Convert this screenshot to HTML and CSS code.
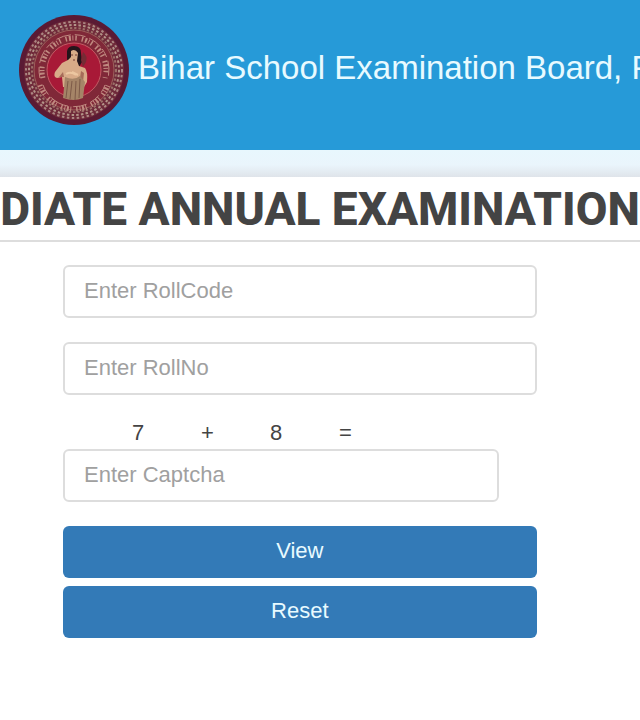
FILE: index.html
```html
<!DOCTYPE html>
<html lang="en">
<head>
    <meta charset="UTF-8">
    <meta name="viewport" content="width=device-width, initial-scale=1.0">
    <title>Bihar School Examination Board</title>
    <link rel="stylesheet" href="styles.css">
</head>
<body>
    <header class="header">
        <svg class="logo" viewBox="0 0 112 112" role="img" aria-label="Board emblem">
            <!-- rings -->
            <circle cx="56" cy="56" r="55" fill="#5a1a34"/>
            <circle cx="56" cy="56" r="50" fill="#6f2a3a"/>
            <circle cx="56" cy="56" r="48" fill="none" stroke="#ab8682" stroke-width="2" stroke-dasharray="2.5 2.5"/>
            <circle cx="56" cy="56" r="45" fill="none" stroke="#b39488" stroke-width="2" stroke-dasharray="2.5 2.2"/>
            <circle cx="56" cy="56" r="42" fill="none" stroke="#9c7068" stroke-width="2" stroke-dasharray="2.3 2"/>
            <circle cx="56" cy="56" r="40" fill="#802838" stroke="#9c5f5a" stroke-width="1"/>
            <!-- lettering band -->
            <g fill="none" stroke="#c08a80">
                <path d="M22 64A35 35 0 1 1 90 64" stroke-width="1" stroke-dasharray="11 4 14 3 9 4 15 4"/>
                <path d="M25 64A32 32 0 1 1 87 64" stroke-width="5" stroke-dasharray="1.5 2 2 1.5 1 2 1.5 5"/>
                <path d="M22 71A36 36 0 0 0 90 71" stroke-width="5" stroke-dasharray="1.5 2 1 1.5 2 1.5 1 5"/>
                <path d="M25 71A33 33 0 0 0 87 71" stroke-width="1" stroke-dasharray="11 4 19 5 14 4"/>
            </g>
            <circle cx="56" cy="56" r="27" fill="#a81937" stroke="#c45a64" stroke-width="1"/>
            <!-- figure -->
            <path d="M49 37q1-5 7-5q7 0 7 7l1 9-3 5-10-2-2-6z" fill="#24151b"/>
            <path d="M65 38q5 4 3 10l-3 5-2-7z" fill="#762b35"/>
            <path d="M53 37q4-3 7 2l-1 8 2 5 6 2q3 4 2 14l-3 5-9 1-12-1-1-10-5 1q-4-1-2-6l7-9 6-3 3-3z" fill="#d8ab88"/>
            <path d="M45 58l-4 5 5 0zM63 57l3 2-1 9-3-4z" fill="#a66c59"/>
            <path d="M47 63q9 4 15-1l5 6-2 16q-9 4-20 0z" fill="#a58467"/>
            <path d="M50 67l-2 17M54 67l-2 18M58 67l-1 19M62 65l-1 19" fill="none" stroke="#7d5a48" stroke-width="1"/>
            <path d="M48 60q5-3 10 1M54 58l6 3" fill="none" stroke="#ecc6a0" stroke-width="2"/>
            <path d="M53 41h2M57 41h2M55 46h2" stroke="#703c35" stroke-width="1"/>
        </svg>
        <span class="board-name">Bihar School Examination Board, P</span>
    </header>
    <div class="strip"></div>
    <h1 class="exam-title">DIATE ANNUAL EXAMINATION</h1>

    <form class="result-form">
        <input class="field" type="text" placeholder="Enter RollCode" aria-label="Enter RollCode">
        <input class="field" type="text" placeholder="Enter RollNo" aria-label="Enter RollNo">
        <div class="captcha">
            <label class="captcha-sum" for="captcha">
                <span>7</span>
                <span>+</span>
                <span>8</span>
                <span>=</span>
            </label>
            <input class="field captcha-field" type="text" id="captcha" placeholder="Enter Captcha">
        </div>
        <div class="buttons">
            <button class="btn" type="submit">View</button>
            <button class="btn" type="reset">Reset</button>
        </div>
    </form>
</body>
</html>
```
FILE: styles.css
```css
* {
    box-sizing: border-box;
}

body {
    margin: 0;
    background-color: #fff;
    font-family: "Liberation Sans", Arial, sans-serif;
    font-size: 22px;
    color: #444;
    overflow-x: hidden;
}

.header {
    display: flex;
    align-items: flex-start;
    gap: 8px;
    height: 150px;
    padding: 14px 0 0 18px;
    background-color: #269ad8;
    overflow: hidden;
}

.logo {
    width: 112px;
    height: 112px;
    flex-shrink: 0;
}

.board-name {
    color: #e8faff;
    font-size: 33px;
    line-height: 108px;
    white-space: nowrap;
}

.strip {
    height: 27px;
    background: linear-gradient(#e8f7fd, #eaf5fc 55%, #dfe4ea);
}

.exam-title {
    display: flex;
    justify-content: center;
    margin: 0;
    padding-top: 1px;
    border-bottom: 2px solid #ddd;
    font-family: Roboto, sans-serif;
    font-size: 46px;
    font-weight: 800;
    line-height: 62px;
    white-space: nowrap;
    overflow: hidden;
}

.result-form {
    display: flex;
    flex-direction: column;
    gap: 24px;
    width: 74%;
    margin: 23px 0 0 63px;
}

.field {
    width: 100%;
    height: 53px;
    padding: 0 19px 2px;
    border: 2px solid #ddd;
    border-radius: 6px;
    background-color: #fff;
    color: #444;
    font-family: inherit;
    font-size: 22px;
}

.field::placeholder {
    color: #a0a0a0;
    opacity: 1;
}

.captcha-sum {
    display: grid;
    grid-template-columns: repeat(4, 69px);
    padding: 0 0 2px 69px;
    line-height: 28px;
}

.captcha-field {
    display: block;
    width: 92%;
}

.buttons {
    display: flex;
    flex-direction: column;
    gap: 8px;
}

.btn {
    height: 52px;
    padding-bottom: 4px;
    border: 0;
    border-radius: 6px;
    background-color: #337ab7;
    color: #e8faff;
    font-family: inherit;
    font-size: 22px;
    cursor: pointer;
}

.btn:hover {
    background-color: #286090;
}
```
